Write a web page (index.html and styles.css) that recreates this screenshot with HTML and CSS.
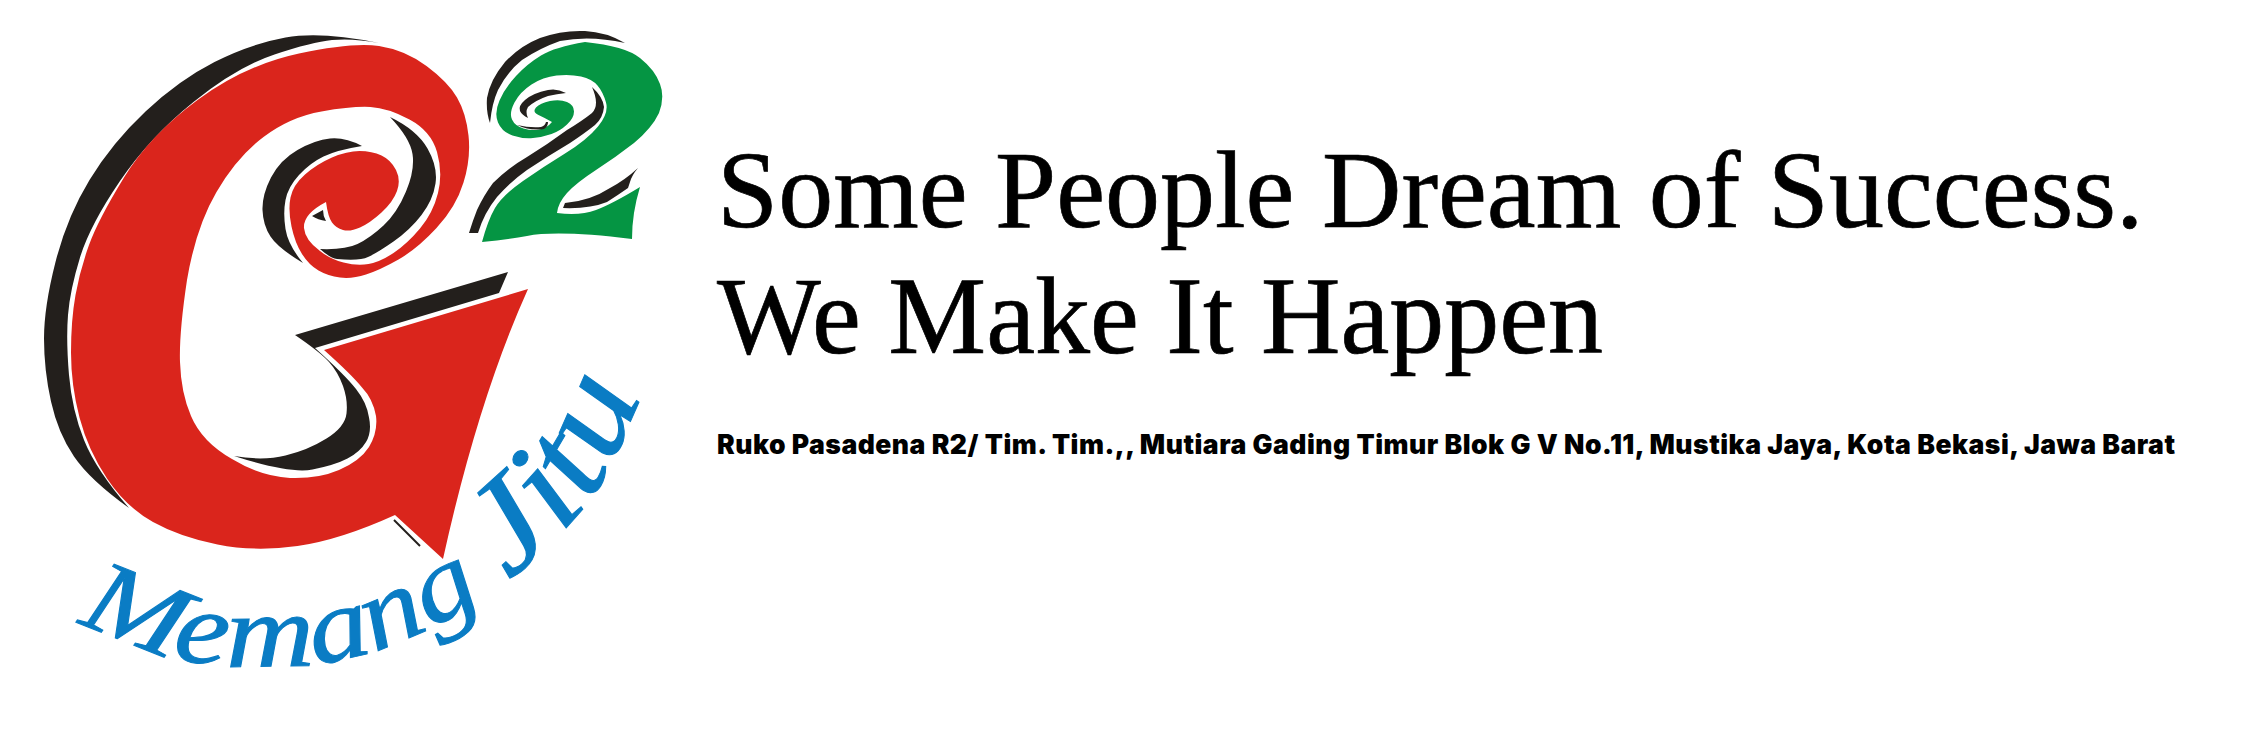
FILE: index.html
```html
<!DOCTYPE html>
<html lang="id">
<head>
<meta charset="utf-8">
<title>G2 Memang Jitu</title>
<link rel="stylesheet" href="styles.css">
</head>
<body>
<main class="banner">
  <svg class="logo" viewBox="0 0 700 752" width="700" height="752" role="img" aria-label="G2 Memang Jitu">
    <path class="ink" d="M379 43 Q321 31 285.5 37.5 Q250 44 214.5 62 Q179 80 145.5 111.5 Q112 143 89.5 180 Q67 217 55.5 262 Q44 307 44 338.5 Q44 370 51 401.5 Q58 433 74 456.5 Q90 480 129 508 Q96 470 84 440 Q72 410 69 375 Q66 340 68 315 Q70 290 80 257.5 Q90 225 120 181 Q150 137 193.5 102 Q237 67 274.5 54.5 Q312 42 332 40 Q353 38 379 43Z"/>
    <path class="red" d="M443 559 L395 515 Q340 540 297.5 546 Q255 552 217.5 544.5 Q180 537 153 522 Q126 507 107 478.5 Q88 450 79.5 417.5 Q71 385 71 352.5 Q71 320 75.5 295 Q80 270 89 245 Q98 220 124 177.5 Q150 135 197.5 100 Q245 65 299 53.5 Q353 42 379 46 Q405 50 426.5 66 Q448 82 457 97.5 Q466 113 468.5 135.5 Q471 158 463.5 182.5 Q456 207 436.5 228 Q417 249 398.5 259.5 Q380 270 366 274.5 Q352 279 340 277.5 Q328 276 318.5 270.5 Q309 265 302 254 Q295 243 291.5 226.5 Q288 210 290.5 197.5 Q293 185 305 174.5 Q317 164 332 157.5 Q347 151 359.5 151 Q372 151 381.5 155.5 Q391 160 396 170 Q401 180 397 191 Q393 202 381.5 212.5 Q370 223 360 227.5 Q350 232 343 230 Q336 228 332 222.5 Q328 217 326 202 Q303 214 304 228 Q305 240 320 251 Q330 259 343.5 262.5 Q357 266 368.5 264 Q380 262 393.5 253 Q407 244 420 228.5 Q433 213 438 193 Q443 173 437 152 Q431 131 409.5 119.5 Q388 108 370.5 107 Q353 106 321.5 111.5 Q290 117 263.5 137 Q237 157 216.5 192 Q196 227 187 280 Q179 333 180 362 Q181 393 191 416 Q202 442 232 459 Q260 476 290 478 Q318 479 339 470 Q360 461 369 447 Q378 432 376 416 Q373 399 362 387.5 Q352 375 324 350 L528 289 Q478 400 443 559Z"/>
    <path class="ink" d="M362 146 Q345 137 330 138.5 Q315 140 297.5 150 Q280 160 271 177.5 Q262 195 262.5 210 Q263 225 270.5 236.5 Q278 248 303 263 Q288 245 285.5 229 Q283 213 285.5 200 Q288 187 299 175 Q310 163 323.5 156.5 Q337 150 362 146Z"/>
    <path class="ink" d="M320 249 Q345 250 357.5 244 Q370 238 383.5 225.5 Q397 213 406 191.5 Q415 170 412.5 154 Q410 138 390 117 Q417 130 427.5 148.5 Q438 167 435.5 183.5 Q433 200 421.5 215 Q410 230 393.5 241.5 Q377 253 368 257 Q360 261 337 259 Q330 258 320 249Z"/>
    <path class="ink" d="M323 210 L312 216 Q318 220 326 221 Q323 216 323 210Z"/>
    <path class="ink" d="M295 335 L508 272 L499 293 L315 348 Q345 375 356 389 Q367 403 369 417.5 Q372 432 366 442 Q360 452 347.5 458.5 Q335 465 312.5 469.5 Q290 474 234 456 Q263 461 285.5 455.5 Q308 450 326.5 438.5 Q345 427 346.5 413.5 Q348 400 343 386 Q338 372 329 362 Q320 352 295 335Z"/>
    <path class="hair" d="M394 520 L420 546"/>
    <path class="green" d="M585 42 Q625 46 640 58 Q655 70 660 84 Q665 97 659 113 Q652 128 634 143 Q616 157 596 170 Q576 183 567 193 Q558 203 557 213 Q580 216 596 210 Q612 204 640 187 Q632 213 632 239 Q558 230 527 236 Q510 239 482 242 Q488 220 495 208 Q503 195 523 181 Q543 167 565 153.5 Q587 140 598 126.5 Q609 113 606 102.5 Q603 92 597.5 85.5 Q592 79 581 76.5 Q570 74 556.5 75.5 Q543 77 531.5 84.5 Q520 92 514.5 102.5 Q509 113 512 119.5 Q515 126 523.5 128.5 Q532 131 539.5 129.5 Q547 128 552 122 Q545 118 538.5 115 Q532 112 536 107.5 Q540 103 550 101 Q560 99 567 102 Q574 105 574 111.5 Q574 118 567 124.5 Q560 131 551.5 134 Q543 137 533 138 Q523 139 512.5 135.5 Q502 132 498 122.5 Q494 113 499.5 100.5 Q505 88 516 76 Q527 64 541 55.5 Q555 47 585 42Z"/>
    <path class="ink" d="M625 43 Q606 32 585 31 Q562 30 540 38 Q520 46 505 62 Q490 80 487 98 Q486 112 490 123 Q492 103 498 90 Q507 72 522 60 Q540 48 560 41 Q590 35 625 43Z"/>
    <path class="ink" d="M592 87 Q603 97 604 107 Q603 118 595 125 Q585 133 570 143 Q548 156 527 170 Q510 182 497 197 Q484 213 478 233 L469 233 Q473 220 477 210 Q484 195 493 183 Q508 168 527 157 Q548 144 567 130 Q582 121 592 113 Q600 105 592 87Z"/>
    <path class="ink" d="M566 93 Q557 88 548 90 Q533 93 525 100 Q518 106 520 111 Q522 115 528 118 Q525 112 528 107 Q536 100 548 96 Q557 94 566 93Z"/>
    <path class="ink" d="M517 125 Q530 128 541 127 Q545 126 546 122 L548 122 Q548 127 544 129 Q530 131 517 125Z"/>
    <path class="ink" d="M563 208 L565 203 Q590 201 610 188 Q625 180 638 168 Q632 175 630 182 L628 188 Q618 195 607 202 Q590 209 563 208Z"/>
    <defs>
      <path id="tagline-curve" d="M72 618 Q147 655 194 662 Q241 668 285 666 Q330 664 356 656 Q382 650 411 637 Q440 625 470 607 Q500 590 540 553 Q580 517 598 488 Q616 460 660 350"/>
    </defs>
    <text class="tagline"><textPath href="#tagline-curve" startOffset="6" textLength="692" lengthAdjust="spacingAndGlyphs">Memang <tspan class="tagline-large">Jitu</tspan></textPath></text>
  </svg>
  <section class="copy">
    <h1 class="headline">Some People Dream of Success.<br>We Make It Happen</h1>
    <p class="address">Ruko Pasadena R2/ Tim. Tim.,, Mutiara Gading Timur Blok G V No.11, Mustika Jaya, Kota Bekasi, Jawa Barat</p>
  </section>
</main>
</body>
</html>
```
FILE: styles.css
```css
html, body {
  margin: 0;
  background: #fff;
}
.banner {
  display: flex;
  width: 2264px;
  height: 752px;
  overflow: hidden;
}
.logo {
  flex: none;
  display: block;
}
.ink { fill: #231f1c; }
.red { fill: #da251c; }
.green { fill: #059543; }
.hair { fill: none; stroke: #231f1c; stroke-width: 2; }
.tagline {
  font-family: "Liberation Serif", serif;
  font-style: italic;
  font-size: 104px;
  fill: #0a7cc4;
  stroke: #0a7cc4;
  stroke-width: 1;
}
.tagline-large {
  font-size: 132px;
}
.copy {
  flex: none;
  margin-left: 17px;
  padding-top: 127px;
}
.headline {
  margin: 0;
  font-family: "Liberation Serif", serif;
  font-weight: 400;
  font-size: 110px;
  line-height: 126px;
  color: #000;
  white-space: nowrap;
  -webkit-text-stroke: 0.7px #000;
}
.address {
  margin: 50px 0 0;
  font-family: "Inter", sans-serif;
  font-weight: 900;
  font-size: 26.5px;
  letter-spacing: 0.5px;
  line-height: 30px;
  color: #000;
  white-space: nowrap;
}
```
